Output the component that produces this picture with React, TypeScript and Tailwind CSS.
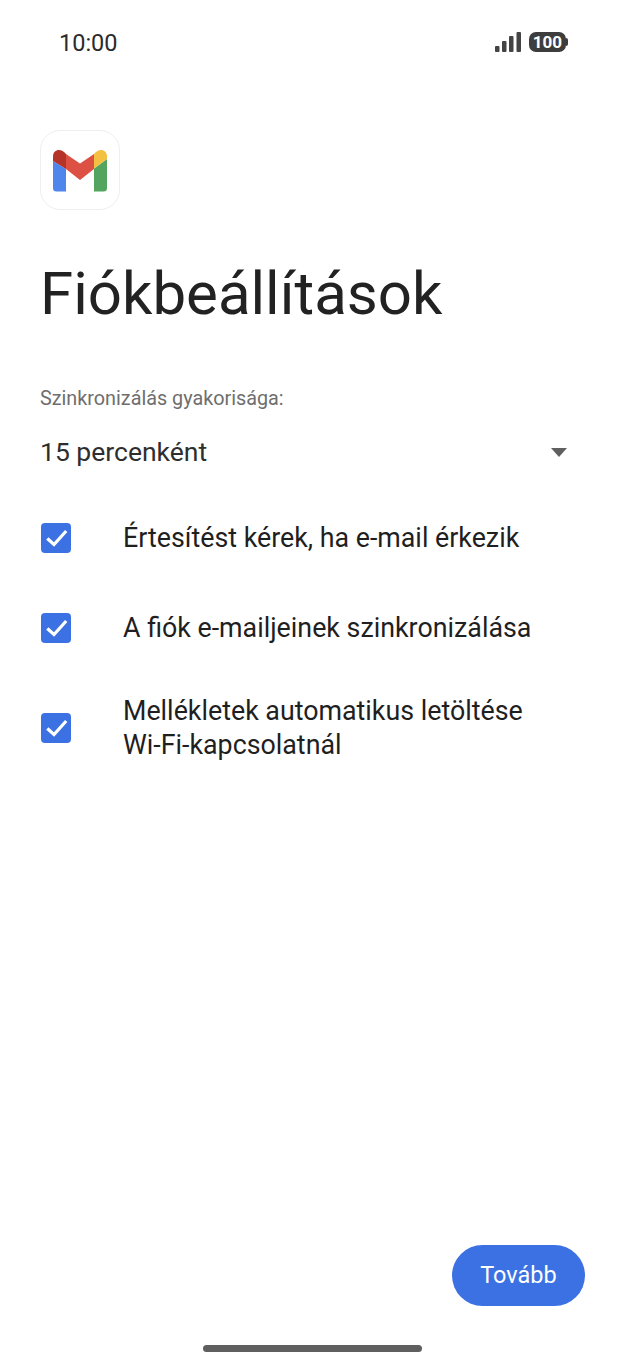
import React from 'react';

const font = { fontFamily: 'Roboto, sans-serif' };

function GmailLogo() {
  return (
    <svg width="54" height="43" viewBox="0 0 54 43" fill="none">
      <path d="M0 12 L0 39 Q0 42.5 3.5 42.5 L13 42.5 L13 20 Z" fill="#4f86ec" />
      <path d="M54 10 L54 39 Q54 42.5 50.5 42.5 L41 42.5 L41 19.5 Z" fill="#53a45f" />
      <path d="M13 5 L27 14.5 L41 5 L41 20 L27 31 L13 20 Z" fill="#dd5144" />
      <path d="M0 12 L0 7.5 C0 0.5 8 -1.5 13 5 L13 20 Z" fill="#b5342a" />
      <path d="M54 10 L54 7.5 C54 0.5 46 -1.5 41 5 L41 19.5 Z" fill="#f4c042" />
    </svg>
  );
}

function CheckBox() {
  return (
    <div className="w-[30px] h-[30px] rounded-[4px] bg-[#3b71e3] shrink-0">
      <svg width="30" height="30" viewBox="0 0 30 30" fill="none">
        <path d="M6.3 15.5 L13 21.5 L25.2 8" stroke="white" strokeWidth="3.2" />
      </svg>
    </div>
  );
}

function Option({ label, className }: { label: React.ReactNode; className: string }) {
  return (
    <div className={`flex items-center ${className}`}>
      <CheckBox />
      <div className="ml-[52px] text-[26.8px] leading-[34px] text-[#1f1f1f]">{label}</div>
    </div>
  );
}

export default function App() {
  return (
    <div className="relative w-[625px] h-[1362px] bg-white flex flex-col overflow-hidden" style={font}>
      <div className="flex items-center justify-between h-[34px] mt-[25px] pl-[59px] pr-[57px]">
        <span className="text-[23.5px] pt-[4px] text-[#2b2b2b]">10:00</span>
        <div className="flex items-center gap-[8px]">
          <svg width="26" height="20" viewBox="0 0 26 20">
            <rect x="0" y="14" width="4.5" height="6" rx="1" fill="#444" />
            <rect x="7" y="9" width="4.5" height="11" rx="1" fill="#444" />
            <rect x="14" y="4" width="4.5" height="16" rx="1" fill="#444" />
            <rect x="21.5" y="0" width="4.5" height="20" rx="1" fill="#444" />
          </svg>
          <div className="flex items-center">
            <div className="w-[37px] h-[20px] rounded-[7px] bg-[#3d3d3d] flex items-center justify-center text-white text-[17px] font-bold leading-none">
              100
            </div>
            <div className="w-[2px] h-[8px] bg-[#3d3d3d] rounded-r-sm" />
          </div>
        </div>
      </div>

      <div className="ml-[40px] mt-[71px] w-[80px] h-[80px] rounded-[20px] border border-[#eeeeee] flex items-center justify-center">
        <GmailLogo />
      </div>

      <h1 className="ml-[40px] mt-[46px] text-[60px] leading-[76px] font-normal text-[#222222]">Fiókbeállítások</h1>

      <div className="ml-[40px] mt-[55px] text-[19.8px] leading-[24px] text-[#6e6e6e]">Szinkronizálás gyakorisága:</div>

      <div className="flex items-center justify-between ml-[40px] mr-[58px] mt-[25px] h-[32px]">
        <span className="text-[26.5px] text-[#2e2e2e]">15 percenként</span>
        <div className="w-0 h-0 border-l-[8.5px] border-r-[8.5px] border-t-[9px] border-l-transparent border-r-transparent border-t-[#5f5f5f]" />
      </div>

      <Option className="ml-[41px] mt-[53px] h-[34px]" label="Értesítést kérek, ha e-mail érkezik" />
      <Option className="ml-[41px] mt-[56px] h-[34px]" label="A fiók e-mailjeinek szinkronizálása" />
      <Option
        className="ml-[41px] mt-[49px]"
        label={
          <>
            Mellékletek automatikus letöltése
            <br />
            Wi-Fi-kapcsolatnál
          </>
        }
      />

      <div className="flex justify-end mt-auto mr-[40px]">
        <button className="w-[133px] h-[61px] rounded-full bg-[#3b71e3] text-white text-[23.5px]">Tovább</button>
      </div>
      <div className="self-center w-[219px] h-[7px] rounded-full bg-[#5f5f5f] mt-[39px] mb-[10px]" />
    </div>
  );
}
